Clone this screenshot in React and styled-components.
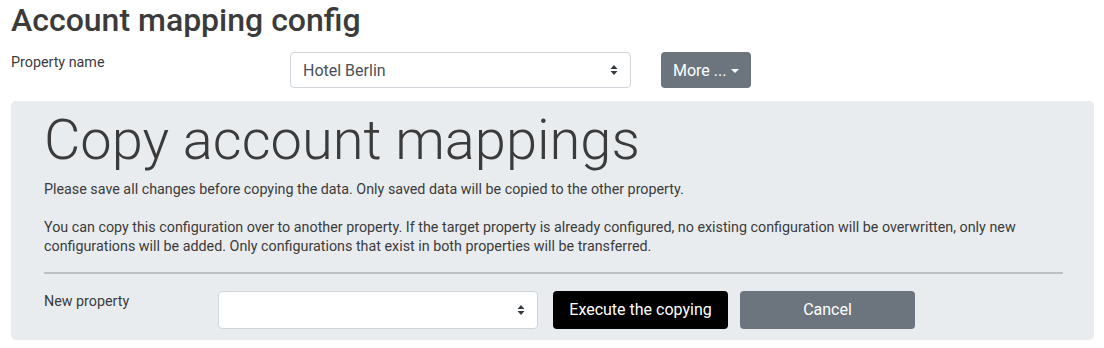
import React from 'react';
import styled, { createGlobalStyle } from 'styled-components';

const GlobalStyle = createGlobalStyle`
  body {
    margin: 0;
    background: #fff;
    font-family: Roboto, "Liberation Sans", sans-serif;
    color: #343a40;
  }
`;

const Page = styled.div`
  padding: 0 10px 0 11px;
`;

const Title = styled.h3`
  margin: 0;
  padding-top: 2px;
  font-size: 32px;
  font-weight: 500;
  line-height: 36px;
  color: #3b3b3b;
`;

const FormRow = styled.div`
  display: flex;
  align-items: flex-start;
  margin-top: ${(p) => p.top || 0}px;
`;

const Label = styled.label`
  flex: 0 0 ${(p) => p.width}px;
  font-size: 14.3px;
  line-height: 20px;
  padding-top: ${(p) => p.pad || 0}px;
  color: #3b3b3b;
`;

const SelectWrap = styled.div`
  position: relative;
  flex: 0 0 ${(p) => p.width}px;
  height: ${(p) => p.height}px;
  margin-right: ${(p) => p.gap}px;
`;

const Select = styled.select`
  appearance: none;
  width: 100%;
  height: 100%;
  box-sizing: border-box;
  border: 1px solid #ced4da;
  border-radius: 4px;
  background: #fff;
  padding: 0 28px 0 12px;
  font-family: Roboto, "Liberation Sans", sans-serif;
  font-size: 16px;
  color: #495057;
  outline: 0;
`;

const Arrows = styled.svg`
  position: absolute;
  right: 13px;
  top: 50%;
  margin-top: -6px;
  pointer-events: none;
`;

const Button = styled.button`
  box-sizing: border-box;
  height: ${(p) => p.height || 36}px;
  width: ${(p) => (p.width ? `${p.width}px` : 'auto')};
  padding: 0 12px;
  margin-right: ${(p) => p.gap || 0}px;
  border: 0;
  border-radius: 4px;
  background: ${(p) => p.bg};
  color: #fff;
  font-family: Roboto, "Liberation Sans", sans-serif;
  font-size: 16px;
  display: inline-flex;
  align-items: center;
  justify-content: center;
  gap: 5px;
  cursor: pointer;
`;

const Caret = styled.span`
  width: 0;
  height: 0;
  border-left: 4px solid transparent;
  border-right: 4px solid transparent;
  border-top: 4px solid #fff;
  margin-top: 1px;
`;

const Jumbotron = styled.section`
  margin-top: 13px;
  background: #e9ecef;
  border-radius: 5px;
  padding: 6px 31px 11px 33px;
`;

const Display = styled.h1`
  margin: 0;
  font-size: 56px;
  font-weight: 300;
  line-height: 67px;
  color: #3b3b3b;
`;

const Text = styled.p`
  margin: ${(p) => p.top || 0}px 0 0;
  font-size: 14.3px;
  line-height: 19.5px;
  color: #3b3b3b;
`;

const Rule = styled.hr`
  margin: 15px 0 17px;
  border: 0;
  border-top: 2px solid #bdbfc1;
`;

const SelectArrows = () => (
  <Arrows width="8" height="12" viewBox="0 0 8 12">
    <path d="M4 1 L7.5 5 L0.5 5 Z" fill="#343a40" />
    <path d="M4 11 L7.5 7 L0.5 7 Z" fill="#343a40" />
  </Arrows>
);

export default function App() {
  return (
    <Page>
      <GlobalStyle />
      <Title>Account mapping config</Title>
      <FormRow top={14}>
        <Label width={279} pad={-2}>Property name</Label>
        <SelectWrap width={341} height={36} gap={30}>
          <Select defaultValue="berlin">
            <option value="berlin">Hotel Berlin</option>
          </Select>
          <SelectArrows />
        </SelectWrap>
        <Button bg="#6c757d">
          More ...
          <Caret />
        </Button>
      </FormRow>

      <Jumbotron>
        <Display>Copy account mappings</Display>
        <Text top={6}>
          Please save all changes before copying the data. Only saved data will be copied to the other property.
        </Text>
        <Text top={18}>
          You can copy this configuration over to another property. If the target property is already configured, no
          existing configuration will be overwritten, only new configurations will be added. Only configurations that
          exist in both properties will be transferred.
        </Text>
        <Rule />
        <FormRow>
          <Label width={174} pad={0}>New property</Label>
          <SelectWrap width={320} height={38} gap={15}>
            <Select defaultValue="">
              <option value=""></option>
            </Select>
            <SelectArrows />
          </SelectWrap>
          <Button bg="#000" width={175} height={38} gap={12}>
            Execute the copying
          </Button>
          <Button bg="#6c757d" width={175} height={38}>
            Cancel
          </Button>
        </FormRow>
      </Jumbotron>
    </Page>
  );
}
